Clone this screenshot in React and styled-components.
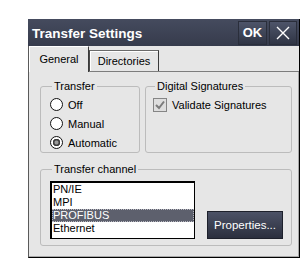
import React from 'react'
import styled, { createGlobalStyle } from 'styled-components'

const GlobalStyle = createGlobalStyle`
  html, body {
    margin: 0;
    background: #fff;
  }
  body {
    font-family: 'Liberation Sans', Arial, sans-serif;
    font-size: 11px;
    color: #000;
  }
`

const Page = styled.div`
  padding: 19px 0 0 28px;
`

const Dialog = styled.div`
  width: 272px;
  box-sizing: border-box;
  border-left: 1px solid #5a5a5a;
  border-right: 1px solid #000;
  border-bottom: 1px solid #000;
  background: #e6e6e6;
  display: flex;
  flex-direction: column;
`

const TitleBar = styled.div`
  height: 27px;
  display: flex;
  align-items: center;
  padding: 0 2px 0 3px;
  background: linear-gradient(#454b5e, #363b4c);
  margin-left: -1px;
`

const Title = styled.div`
  flex: 1;
  color: #fff;
  font-weight: bold;
  font-size: 13.5px;
  padding-top: 2px;
  padding-left: 1px;
`

const BarButton = styled.div`
  width: ${p => p.$w}px;
  height: 24px;
  margin-left: 2px;
  display: flex;
  align-items: center;
  justify-content: center;
  color: #fff;
  font-weight: bold;
  font-size: 13px;
  background: linear-gradient(#4f566b, #2e3343);
  box-shadow: inset 0 0 0 1px #2a2e3b;
`

const TabRow = styled.div`
  height: 25px;
  display: flex;
  align-items: flex-end;
  position: relative;
  z-index: 1;
`

const Tab = styled.div`
  box-sizing: border-box;
  width: ${p => p.$w}px;
  height: ${p => (p.$active ? 26 : 21)}px;
  margin-bottom: ${p => (p.$active ? -1 : 0)}px;
  display: flex;
  align-items: center;
  justify-content: center;
  padding-bottom: ${p => (p.$active ? 2 : 0)}px;
  background: #e6e6e6;
  border-top: 1px solid ${p => (p.$active ? '#fff' : '#6a6a6a')};
  border-left: 1px solid ${p => (p.$active ? '#fff' : '#4a4a4a')};
  border-right: 1px solid #3a3a3a;
  box-shadow: ${p => (p.$active ? 'none' : 'inset 1px 1px 0 #fff')};
`

const Panel = styled.div`
  border-top: 1px solid #7d7d7d;
  padding: 8px 7px 11px 11px;
  display: flex;
  flex-direction: column;
  gap: 10px;
  box-shadow: inset -1px -1px 0 #a8a8a8;
`

const GroupRow = styled.div`
  display: flex;
  gap: 5px;
`

const Group = styled.fieldset`
  margin: 0;
  padding: ${p => p.$pad};
  width: ${p => p.$w}px;
  box-sizing: border-box;
  border: 1px solid #bcbcbc;
  border-radius: 3px;
  min-width: 0;
`

const Legend = styled.legend`
  padding: 0 2px;
  margin-left: 2px;
  line-height: 12px;
  font-size: 11px;
`

const OptionRow = styled.label`
  height: 19px;
  display: flex;
  align-items: center;
  gap: 5px;
`

const Radio = styled.span`
  width: 13px;
  height: 13px;
  box-sizing: border-box;
  border-radius: 50%;
  border: 1px solid #111;
  background: ${p =>
    p.$checked
      ? 'radial-gradient(circle, #9a9a9a 0 1.5px, #3d3d3d 2.5px 3.5px, #fff 4px)'
      : '#fff'};
`

const Check = styled.span`
  width: 14px;
  height: 14px;
  box-sizing: border-box;
  border: 1px solid #858585;
  background: #dedede;
  display: flex;
  align-items: center;
  justify-content: center;
`

const ChannelBody = styled.div`
  display: flex;
  align-items: flex-end;
  gap: 12px;
`

const List = styled.div`
  width: 145px;
  height: 58px;
  box-sizing: border-box;
  background: #fff;
  border: 1px solid #000;
  border-width: 2px 1px 1px 2px;
  padding-top: 0;
`

const Item = styled.div`
  height: 13px;
  line-height: 13px;
  padding-left: 1px;
  box-sizing: border-box;
  color: ${p => (p.$selected ? '#fff' : '#000')};
  background: ${p => (p.$selected ? '#5d606d' : 'transparent')};
  outline: ${p => (p.$selected ? '1px dotted #b8b8c0' : 'none')};
  outline-offset: -1px;
`

const Button = styled.div`
  width: 76px;
  height: 28px;
  box-sizing: border-box;
  display: flex;
  align-items: center;
  justify-content: center;
  color: #fff;
  font-size: 11.5px;
  background: linear-gradient(#4c5266, #2b2f3e);
  border: 1px solid #1d202b;
`

export default function App() {
  const channels = ['PN/IE', 'MPI', 'PROFIBUS', 'Ethernet']
  return (
    <Page>
      <GlobalStyle />
      <Dialog>
        <TitleBar>
          <Title>Transfer Settings</Title>
          <BarButton $w={29}>OK</BarButton>
          <BarButton $w={28}>
            <svg width="16" height="16" viewBox="0 0 16 16">
              <path d="M2 2 L14 14 M14 2 L2 14" stroke="#fff" strokeWidth="1.4" />
            </svg>
          </BarButton>
        </TitleBar>
        <TabRow>
          <Tab $active $w={60}>General</Tab>
          <Tab $w={70}>Directories</Tab>
        </TabRow>
        <Panel>
          <GroupRow>
            <Group $w={100} $pad="3px 0 0 9px">
              <Legend>Transfer</Legend>
              <OptionRow><Radio />Off</OptionRow>
              <OptionRow><Radio />Manual</OptionRow>
              <OptionRow><Radio $checked />Automatic</OptionRow>
            </Group>
            <Group $w={147} $pad="3px 0 0 7px">
              <Legend>Digital Signatures</Legend>
              <OptionRow>
                <Check>
                  <svg width="12" height="12" viewBox="0 0 12 12">
                    <path d="M2 6 L5 9 L10 2.5" fill="none" stroke="#7b7b7b" strokeWidth="2" />
                  </svg>
                </Check>
                Validate Signatures
              </OptionRow>
            </Group>
          </GroupRow>
          <Group $w={252} $pad="6px 0 6px 9px">
            <Legend>Transfer channel</Legend>
            <ChannelBody>
              <List>
                {channels.map(c => (
                  <Item key={c} $selected={c === 'PROFIBUS'}>{c}</Item>
                ))}
              </List>
              <Button>Properties...</Button>
            </ChannelBody>
          </Group>
        </Panel>
      </Dialog>
    </Page>
  )
}
